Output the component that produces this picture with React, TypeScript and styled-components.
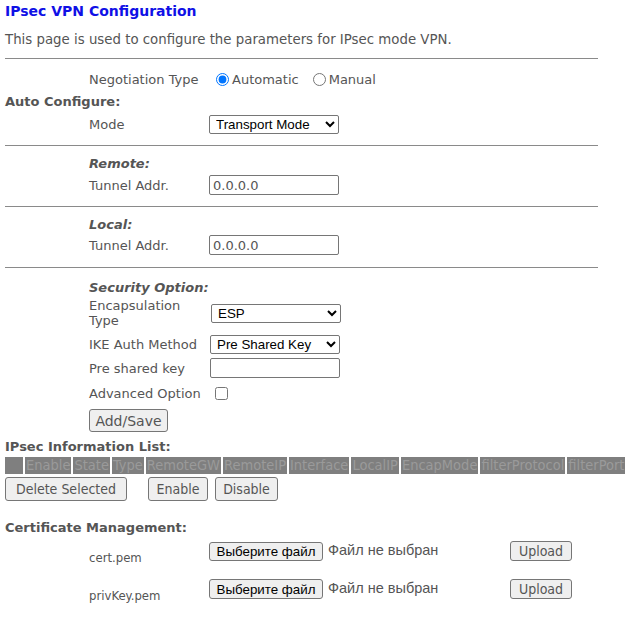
import React from "react";
import styled, { createGlobalStyle } from "styled-components";

const Global = createGlobalStyle`
  html, body { margin: 0; padding: 0; background: #fff; }
  body { font-family: "DejaVu Sans", Verdana, sans-serif; font-size: 13px; color: #555; }
`;

const Page = styled.div`
  width: 593px;
  padding: 0 5px;
`;

const Title = styled.div`
  height: 22px;
  display: flex;
  align-items: center;
  font-weight: bold;
  font-size: 14px;
  color: #1010e6;
`;

const Desc = styled.div`
  margin-top: 6px;
  height: 22px;
  display: flex;
  align-items: center;
  font-size: 13.33px;
`;

const Rule = styled.div<{ $mt: number }>`
  margin-top: ${(p) => p.$mt}px;
  height: 1px;
  background: #8a8a8a;
`;

const Row = styled.div<{ $h: number; $mt?: number; $indent?: boolean; $top?: boolean }>`
  display: flex;
  align-items: ${(p) => (p.$top ? "flex-start" : "center")};
  height: ${(p) => p.$h}px;
  margin-top: ${(p) => p.$mt ?? 0}px;
  padding-left: ${(p) => (p.$indent === false ? 0 : 84)}px;
`;

const Label = styled.div`
  width: 120px;
  flex: none;
  line-height: 15px;
`;

const Heading = styled.div<{ $italic?: boolean }>`
  font-weight: bold;
  font-style: ${(p) => (p.$italic ? "italic" : "normal")};
  color: #555;
`;

const Select = styled.select<{ $ml?: number }>`
  width: 130px;
  height: 19px;
  margin: 0 0 0 ${(p) => p.$ml ?? 0}px;
  font-family: "Liberation Sans", Arial, sans-serif;
  font-size: 13.33px;
  color: #000;
  border: 1px solid #767676;
  border-radius: 2px;
  background: #fff;
  padding: 0 0 0 2px;
`;

const TextInput = styled.input<{ $ml?: number }>`
  box-sizing: border-box;
  width: 130px;
  height: 20px;
  margin: 0 0 0 ${(p) => p.$ml ?? 0}px;
  padding: 1px 3px;
  font-family: "DejaVu Sans", sans-serif;
  font-size: 13px;
  color: #555;
  border: 1px solid #767676;
  border-radius: 2px;
`;

const RadioLabel = styled.label<{ $ml: number }>`
  display: flex;
  align-items: center;
  margin-left: ${(p) => p.$ml}px;
  input { margin: 0 3px 0 0; width: 13px; height: 13px; }
`;

const Check = styled.input`
  margin: 0 0 0 6px;
  width: 13px;
  height: 13px;
`;

const Button = styled.button<{ $w: number; $h?: number; $condensed?: boolean; $dark?: boolean; $ml?: number; $mt?: number }>`
  box-sizing: border-box;
  width: ${(p) => p.$w}px;
  height: ${(p) => p.$h ?? 24}px;
  margin: ${(p) => p.$mt ?? 0}px 0 0 ${(p) => p.$ml ?? 0}px;
  padding: 0;
  background: #efefef;
  border: 1px solid #767676;
  border-radius: 3px;
  font-family: ${(p) =>
    p.$dark ? '"Liberation Sans Narrow", "Liberation Sans", Arial, sans-serif' : p.$condensed ? '"DejaVu Sans Condensed", "DejaVu Sans", sans-serif' : '"DejaVu Sans", sans-serif'};
  font-size: ${(p) => (p.$dark ? "13.33px" : "14px")};
  color: ${(p) => (p.$dark ? "#000" : "#555")};
  flex: none;
`;

const TableHead = styled.div`
  display: flex;
  gap: 2px;
  height: 17px;
  width: max-content;
`;

const HeadCell = styled.div<{ $w?: number }>`
  flex: none;
  background: #7f7f7f;
  color: #9a9a9a;
  font-family: "DejaVu Sans Condensed", "DejaVu Sans", sans-serif;
  font-size: 14.5px;
  line-height: 17px;
  padding: 0 1px;
  min-width: ${(p) => p.$w ?? 0}px;
  box-sizing: border-box;
  white-space: nowrap;
`;

const CertLabel = styled.div`
  width: 120px;
  flex: none;
  font-family: "DejaVu Sans Condensed", "DejaVu Sans", sans-serif;
  font-size: 13px;
  padding-top: 10px;
`;

const NoFile = styled.span`
  margin: 2px 0 0 5px;
  width: 182px;
  flex: none;
  font-family: "Liberation Sans Narrow", "Liberation Sans", Arial, sans-serif;
  font-size: 14.5px;
  color: #555;
`;

const headers = ["Enable", "State", "Type", "RemoteGW", "RemoteIP", "Interface", "LocalIP", "EncapMode", "filterProtocol", "filterPort"];

export default function App() {
  return (
    <Page>
      <Global />
      <Title>IPsec VPN Configuration</Title>
      <Desc>This page is used to configure the parameters for IPsec mode VPN.</Desc>
      <Rule $mt={8} />
      <Row $h={22} $mt={9}>
        <Label>Negotiation Type</Label>
        <RadioLabel $ml={7}>
          <input type="radio" name="neg" defaultChecked />
          Automatic
        </RadioLabel>
        <RadioLabel $ml={14}>
          <input type="radio" name="neg" />
          Manual
        </RadioLabel>
      </Row>
      <Row $h={22} $indent={false}>
        <Heading>Auto Configure:</Heading>
      </Row>
      <Row $h={24}>
        <Label>Mode</Label>
        <Select defaultValue="t">
          <option value="t">Transport Mode</option>
          <option value="u">Tunnel Mode</option>
        </Select>
      </Row>
      <Rule $mt={9} />
      <Row $h={22} $mt={6}>
        <Heading $italic>Remote:</Heading>
      </Row>
      <Row $h={22}>
        <Label>Tunnel Addr.</Label>
        <TextInput defaultValue="0.0.0.0" />
      </Row>
      <Rule $mt={10} />
      <Row $h={22} $mt={6}>
        <Heading $italic>Local:</Heading>
      </Row>
      <Row $h={20}>
        <Label>Tunnel Addr.</Label>
        <TextInput defaultValue="0.0.0.0" />
      </Row>
      <Rule $mt={12} />
      <Row $h={22} $mt={8}>
        <Heading $italic>Security Option:</Heading>
      </Row>
      <Row $h={30}>
        <Label>Encapsulation Type</Label>
        <Select $ml={2} defaultValue="esp">
          <option value="esp">ESP</option>
          <option value="ah">AH</option>
        </Select>
      </Row>
      <Row $h={22} $mt={5}>
        <Label>IKE Auth Method</Label>
        <Select $ml={1} defaultValue="psk">
          <option value="psk">Pre Shared Key</option>
          <option value="cert">Certificate</option>
        </Select>
      </Row>
      <Row $h={22} $mt={2}>
        <Label>Pre shared key</Label>
        <TextInput $ml={1} />
      </Row>
      <Row $h={22} $mt={3}>
        <Label>Advanced Option</Label>
        <Check type="checkbox" />
      </Row>
      <Row $h={23} $mt={5}>
        <Button $w={79} $h={23}>Add/Save</Button>
      </Row>
      <Row $h={22} $mt={3} $indent={false}>
        <Heading>IPsec Information List:</Heading>
      </Row>
      <TableHead>
        <HeadCell $w={18} />
        {headers.map((h) => (
          <HeadCell key={h}>{h}</HeadCell>
        ))}
      </TableHead>
      <Row $h={24} $mt={3} $indent={false}>
        <Button $w={122} $condensed>Delete Selected</Button>
        <Button $w={60} $ml={21} $condensed>Enable</Button>
        <Button $w={63} $ml={7} $condensed>Disable</Button>
      </Row>
      <Row $h={22} $mt={15} $indent={false}>
        <Heading>Certificate Management:</Heading>
      </Row>
      <Row $h={34} $mt={2} $top>
        <CertLabel>cert.pem</CertLabel>
        <Button $w={114} $h={19} $mt={2} $dark>Выберите файл</Button>
        <NoFile>Файл не выбран</NoFile>
        <Button $w={62} $h={20} $mt={1} $condensed>Upload</Button>
      </Row>
      <Row $h={34} $mt={4} $top>
        <CertLabel>privKey.pem</CertLabel>
        <Button $w={114} $h={20} $mt={1} $dark>Выберите файл</Button>
        <NoFile>Файл не выбран</NoFile>
        <Button $w={62} $h={20} $mt={1} $condensed>Upload</Button>
      </Row>
    </Page>
  );
}
